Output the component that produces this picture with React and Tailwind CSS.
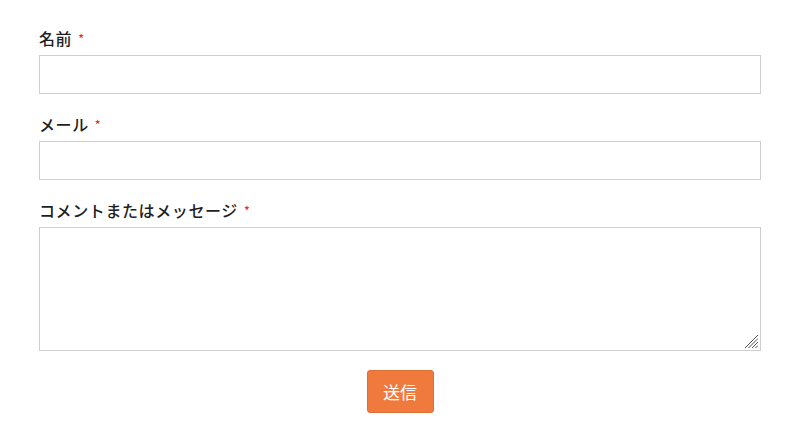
import React from "react";

const Field = ({ label, children }) => (
  <div className="mb-[19px]">
    <label className="block mb-[6px] text-[16px] leading-[22px] font-medium tracking-[0.6px] text-[#1e1e1e]">
      {label}
      <span className="ml-[6px] text-[#e0302a] text-[12px] align-top">*</span>
    </label>
    {children}
  </div>
);

export default function App() {
  return (
    <div
      className="min-h-screen bg-white"
      style={{ fontFamily: '"Noto Sans CJK JP", "Noto Sans", sans-serif' }}
    >
      <form className="w-[722px] ml-[39px] pt-[27px]">
        <Field label="名前">
          <input className="block w-full h-[39px] border border-[#cfcfcf] bg-white outline-none" />
        </Field>
        <Field label="メール">
          <input className="block w-full h-[39px] border border-[#cfcfcf] bg-white outline-none" />
        </Field>
        <Field label="コメントまたはメッセージ">
          <div className="relative">
            <textarea className="block w-full h-[124px] border border-[#cfcfcf] bg-white outline-none resize-none" />
            <svg
              className="absolute right-[3px] bottom-[3px]"
              width="14"
              height="14"
              viewBox="0 0 14 14"
            >
              <g stroke="#555" strokeWidth="1">
                <line x1="14" y1="1" x2="1" y2="14" />
                <line x1="14" y1="4.5" x2="4.5" y2="14" />
                <line x1="14" y1="8" x2="8" y2="14" />
                <line x1="14" y1="11.5" x2="11.5" y2="14" />
              </g>
            </svg>
          </div>
        </Field>
        <div className="flex justify-center">
          <button
            type="button"
            className="h-[43px] w-[67px] rounded-[3px] bg-[#f07a3e] border border-[#e06f35] text-white text-[17px]"
          >
            送信
          </button>
        </div>
      </form>
    </div>
  );
}
